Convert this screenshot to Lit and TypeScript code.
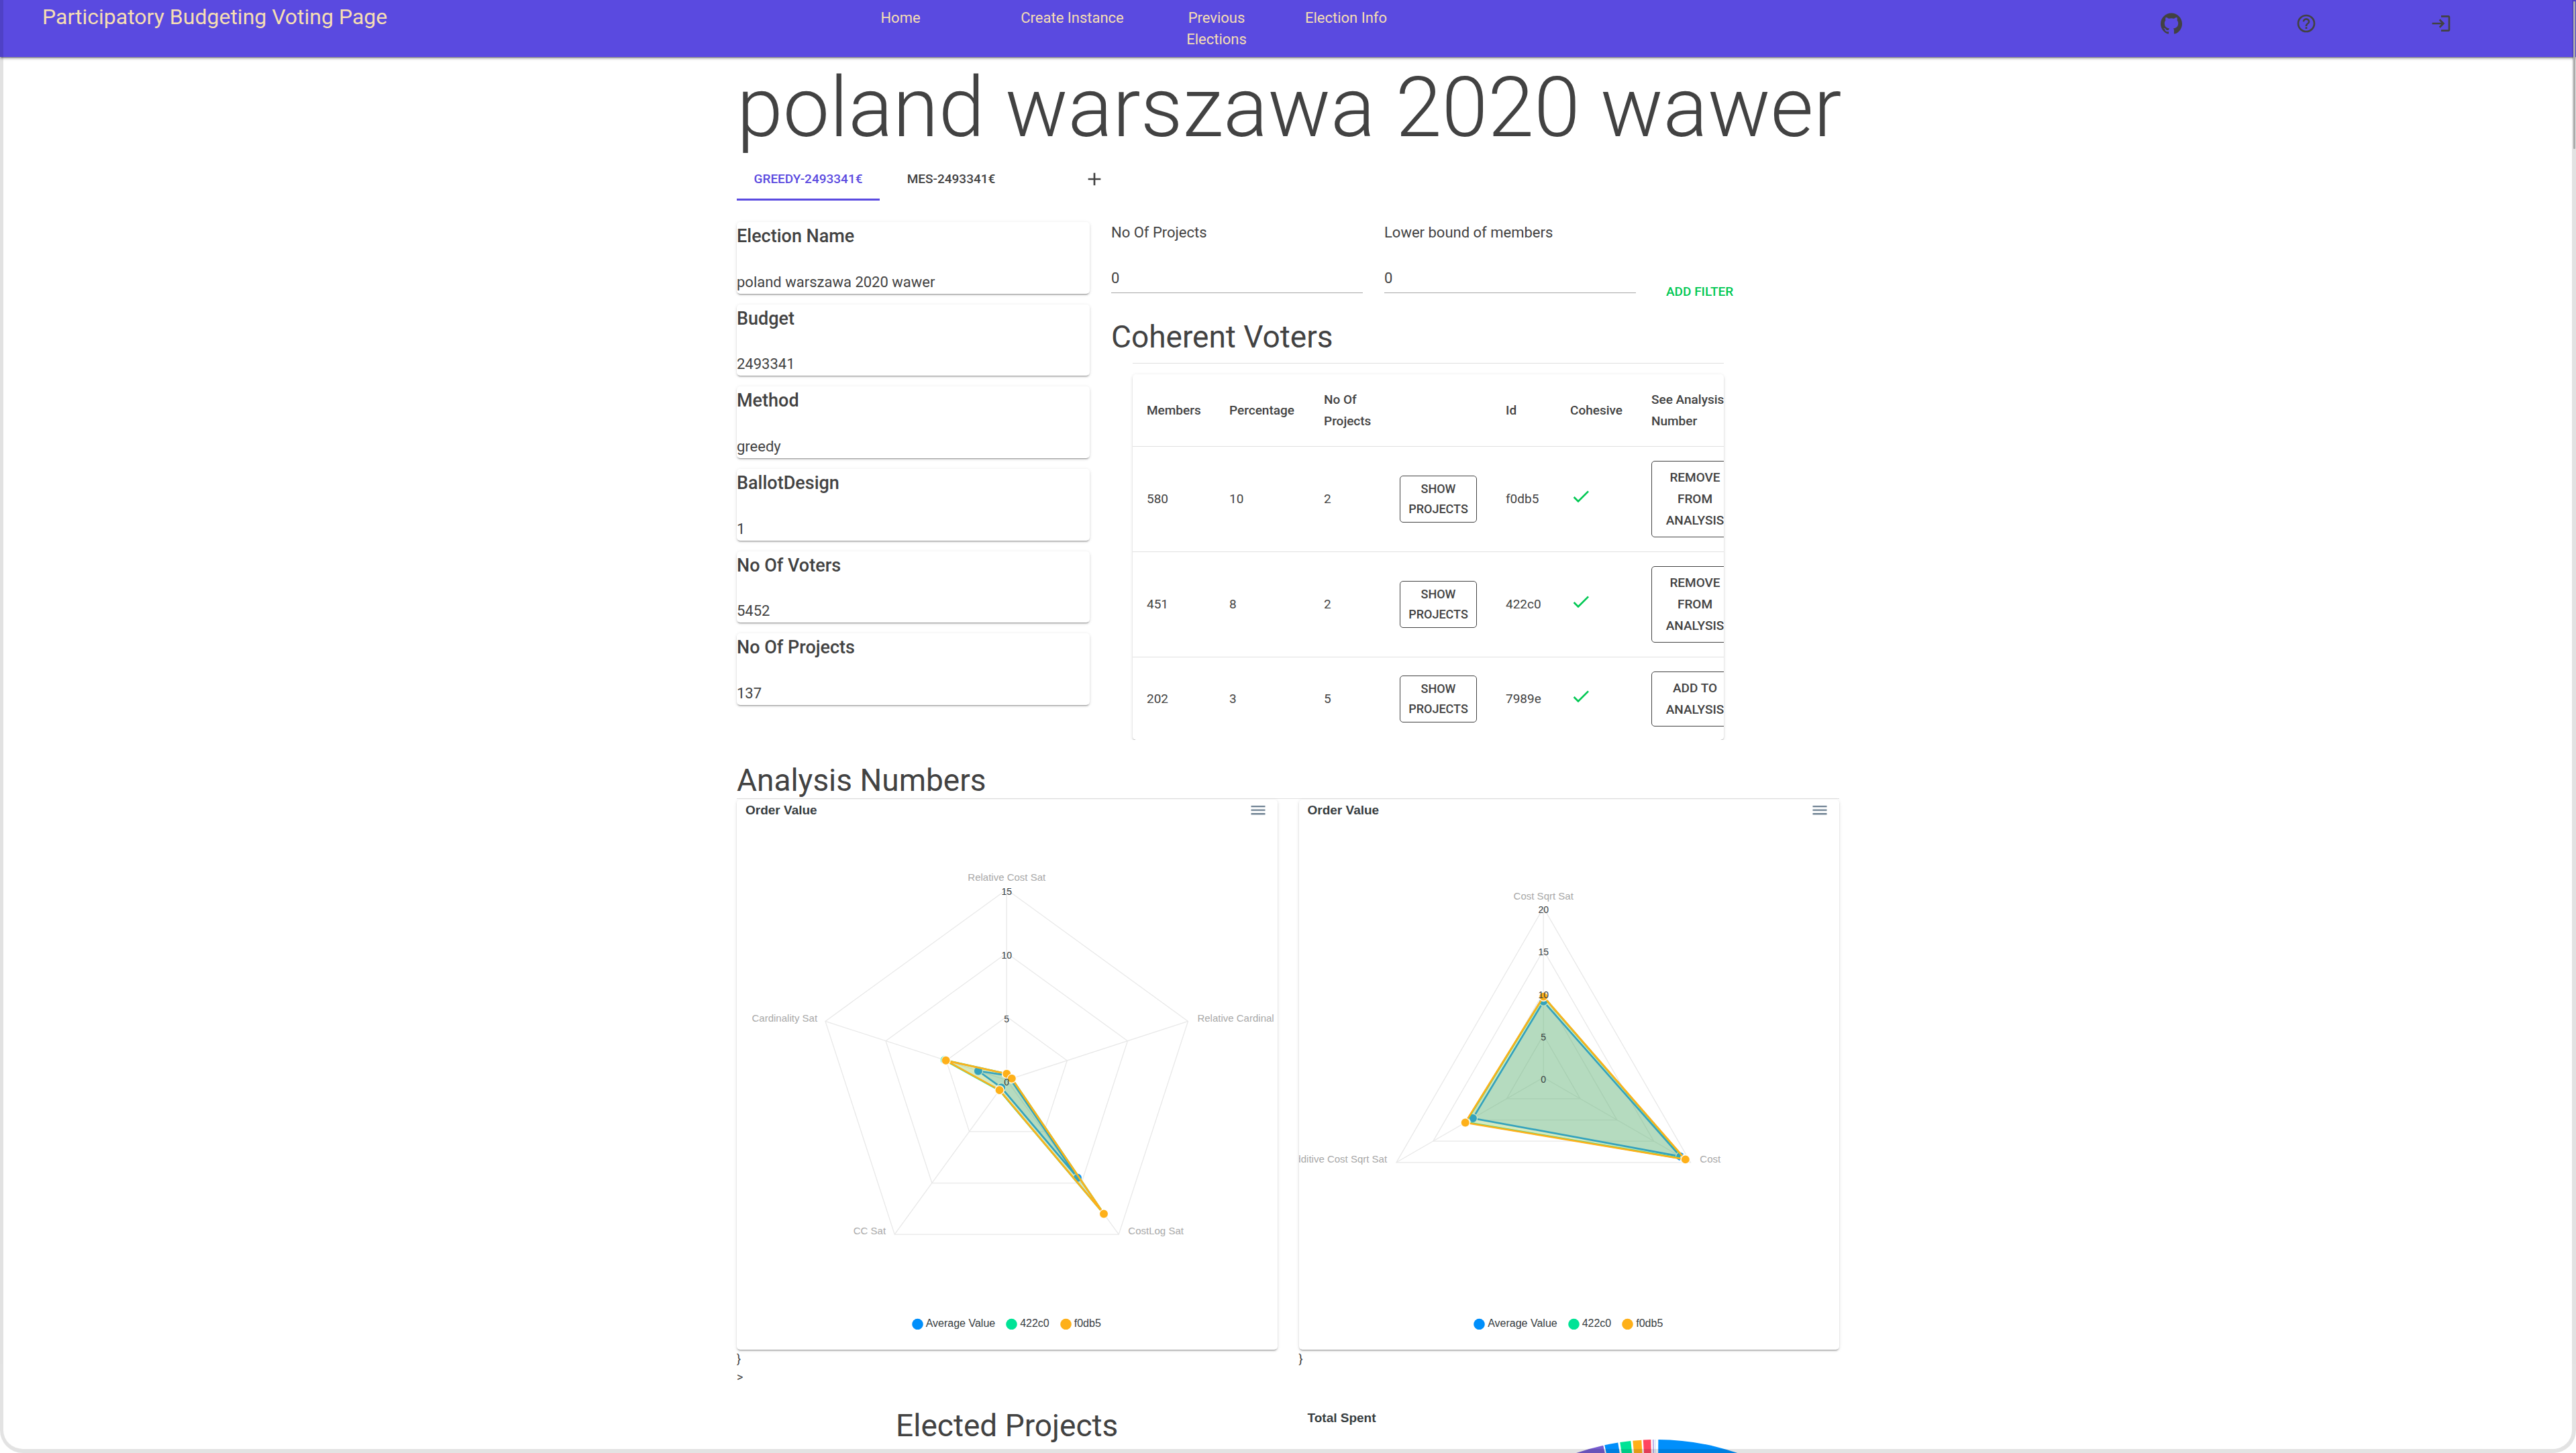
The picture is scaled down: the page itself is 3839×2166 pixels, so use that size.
import { LitElement, html, svg, css } from "lit";
import { customElement, property } from "lit/decorators.js";

type Series = { name: string; color: string; values: number[] };
type AxisLabel = { text: string; x: number; y: number; anchor: string };

const COLORS = { blue: "#008ffb", green: "#00e396", orange: "#feb019", red: "#ff4560", purple: "#775dd0" };

@customElement("radar-card")
export class RadarCard extends LitElement {
  @property({ attribute: false }) series: Series[] = [];
  @property({ attribute: false }) labels: AxisLabel[] = [];
  @property({ type: Number }) cx = 0;
  @property({ type: Number }) cy = 0;
  @property({ type: Number }) radius = 0;
  @property({ type: Number }) max = 0;

  static styles = css`
    :host {
      display: flex;
      flex-direction: column;
      background: #fff;
      border-radius: 5px;
      overflow: hidden;
      box-shadow: 0 3px 1px -2px rgba(0, 0, 0, 0.2), 0 2px 2px rgba(0, 0, 0, 0.14), 0 1px 5px rgba(0, 0, 0, 0.12);
      font-family: "Liberation Sans", Arial, sans-serif;
      color: #373d3f;
    }
    .head {
      display: flex;
      justify-content: space-between;
      align-items: flex-start;
      height: 40px;
      padding: 2px 15px 0 13px;
      box-sizing: border-box;
    }
    .title {
      margin: 0;
      font-size: 19px;
      line-height: 28px;
      font-weight: 700;
    }
    .menu {
      padding: 0;
      border: 0;
      background: none;
      width: 28px;
      height: 28px;
    }
    .menu svg {
      display: block;
      fill: #6e8192;
    }
    .plot {
      display: block;
      width: 100%;
    }
    .tick {
      font-size: 14px;
      fill: #373d3f;
    }
    .axis {
      font-size: 15px;
      fill: #a8a8a8;
    }
    .legend {
      display: flex;
      justify-content: center;
      gap: 16px;
      margin: 0;
      padding: 21px 2px 29px 0;
      list-style: none;
      font-size: 16px;
      line-height: 20px;
    }
    .item {
      display: flex;
      align-items: center;
      gap: 4px;
    }
  `;

  private point(index: number, value: number): [number, number] {
    const angle = (index * 2 * Math.PI) / this.labels.length;
    const r = (value / this.max) * this.radius;
    return [this.cx + r * Math.sin(angle), this.cy - r * Math.cos(angle)];
  }

  private ring(values: number[]): string {
    return values.map((v, i) => this.point(i, v).map((n) => n.toFixed(1)).join(",")).join(" ");
  }

  render() {
    const ticks: number[] = [];
    for (let t = 0; t <= this.max; t += 5) ticks.push(t);
    return html`
      <div class="head">
        <h3 class="title">Order Value</h3>
        <button class="menu" aria-label="Menu">
          <svg width="28" height="28" viewBox="0 0 24 24">
            <path d="M3 17.5h18v-2H3v2zm0-4.8h18v-2H3v2zm0-6.8v2h18v-2H3z" />
          </svg>
        </button>
      </div>
      <svg class="plot" viewBox="0 40 805 710">
        ${ticks.slice(1).map(
          (t) => svg`<polygon points=${this.ring(this.labels.map(() => t))} fill="none" stroke="#e8e8e8" stroke-width="1.3" />`
        )}
        ${this.labels.map((_, i) => {
          const [x, y] = this.point(i, this.max);
          return svg`<line x1=${this.cx} y1=${this.cy} x2=${x} y2=${y} stroke="#e8e8e8" stroke-width="1.3" />`;
        })}
        ${this.series.map(
          (s) => svg`<g>
            <polygon points=${this.ring(s.values)} fill=${s.color} fill-opacity="0.2" stroke=${s.color} stroke-width="2.7" />
            ${s.values.map((v, i) => {
              const [x, y] = this.point(i, v);
              return svg`<circle cx=${x} cy=${y} r="6.6" fill=${s.color} stroke="#fff" stroke-opacity="0.9" stroke-width="1.3" />`;
            })}
          </g>`
        )}
        ${ticks.map((t) => svg`<text class="tick" x=${this.cx} y=${this.point(0, t)[1] + 8} text-anchor="middle">${t}</text>`)}
        ${this.labels.map((l) => svg`<text class="axis" x=${l.x} y=${l.y} text-anchor=${l.anchor}>${l.text}</text>`)}
      </svg>
      <ul class="legend">
        ${this.series.map(
          (s) => html`<li class="item">
            <svg width="17" height="18" viewBox="0 0 17 18"><circle cx="8.5" cy="10" r="8.3" fill=${s.color} /></svg>${s.name}
          </li>`
        )}
      </ul>
    `;
  }
}

@customElement("app-root")
export class AppRoot extends LitElement {
  static styles = css`
    :host {
      display: block;
      font-family: Roboto, sans-serif;
      font-size: 22px;
      line-height: 32px;
      color: #424242;
      background: #fff;
    }
    .page {
      position: relative;
      height: 100vh;
      overflow: hidden;
    }
    .bar {
      display: grid;
      grid-template-columns: 1214fr 256fr 256fr 174fr 212fr 1023fr 201fr 201fr 201fr 101fr;
      align-items: start;
      height: 85px;
      padding-top: 11px;
      box-sizing: border-box;
      background: #5a4ae0;
      box-shadow: 0 3px 1px -2px rgba(0, 0, 0, 0.2), 0 2px 3px rgba(0, 0, 0, 0.3), 0 2px 6px rgba(0, 0, 0, 0.1);
    }
    .brand {
      padding-left: 63px;
      font-size: 32px;
      line-height: 28px;
      color: #f5deb3;
    }
    .link {
      padding: 0 24px;
      text-align: center;
      text-decoration: none;
      color: #f5deb3;
    }
    .tool {
      justify-self: center;
      padding: 0;
      margin-top: 8px;
      border: 0;
      background: none;
      color: #424242;
    }
    .tool:first-of-type {
      grid-column: 7;
    }
    .icon {
      display: block;
      width: 32px;
      height: 32px;
      fill: currentColor;
    }
    .main {
      max-width: 1643px;
      margin: 0 auto;
      padding-top: 12px;
    }
    .name {
      margin: 0;
      font-size: 124px;
      line-height: 128px;
      font-weight: 300;
      white-space: nowrap;
    }
    .tabs {
      display: flex;
      margin-top: 10px;
    }
    .tab {
      display: grid;
      place-items: center;
      min-width: 213px;
      height: 64px;
      padding: 0 21px;
      border: 0;
      border-bottom: 3px solid transparent;
      border-top: 3px solid transparent;
      background: none;
      font: 500 19px/32px Roboto, sans-serif;
      color: #424242;
    }
    .tab.on {
      color: #5a4ae0;
      border-bottom-color: #5a4ae0;
    }
    .overview {
      display: grid;
      grid-template-columns: 526fr 1085fr;
      gap: 32px;
      align-items: start;
      margin-top: 32px;
    }
    .facts {
      display: grid;
      grid-auto-rows: 1fr;
      gap: 16px;
      min-height: 720px;
    }
    .fact {
      display: flex;
      flex-direction: column;
      justify-content: space-between;
      padding-bottom: 1px;
      border-radius: 5px;
      box-shadow: 0 3px 1px -2px rgba(0, 0, 0, 0.2), 0 2px 2px rgba(0, 0, 0, 0.14), 0 1px 5px rgba(0, 0, 0, 0.12);
    }
    .fact-title {
      margin: 0;
      font-size: 27px;
      line-height: 43px;
      font-weight: 500;
    }
    .fact-value {
      margin: 0;
    }
    .filters {
      display: grid;
      grid-template-columns: 375fr 375fr 271fr;
      gap: 32px;
      align-items: start;
      height: 128px;
    }
    .field {
      display: flex;
      flex-direction: column;
      gap: 32px;
    }
    .input {
      height: 42px;
      padding: 0 0 2px;
      box-sizing: border-box;
      border: 0;
      border-bottom: 1px solid #a6a6a6;
      border-radius: 0;
      outline: 0;
      background: none;
      font: 400 22px/32px Roboto, sans-serif;
      color: #424242;
    }
    .add {
      align-self: end;
      justify-self: start;
      height: 48px;
      padding: 0 13px;
      border: 0;
      background: none;
      font: 500 19px/32px Roboto, sans-serif;
      color: #00c853;
    }
    .heading {
      margin: 0;
      font-size: 46px;
      line-height: 54px;
      font-weight: 400;
    }
    .voters {
      margin-top: 16px;
    }
    .rule {
      width: 881px;
      max-width: 100%;
      height: 1px;
      margin: 12px 0 16px 32px;
      border: 0;
      background: #e0e0e0;
    }
    .table-card {
      width: 881px;
      max-width: 100%;
      height: 545px;
      margin-left: 32px;
      overflow: hidden;
      border-radius: 5px;
      box-shadow: 0 3px 1px -2px rgba(0, 0, 0, 0.2), 0 2px 2px rgba(0, 0, 0, 0.14), 0 1px 5px rgba(0, 0, 0, 0.12);
      clip-path: inset(-4px -4px 0 -4px);
    }
    .table {
      width: 923px;
      table-layout: fixed;
      border-collapse: separate;
      border-spacing: 0;
      font-size: 19px;
      line-height: 32px;
    }
    .table th,
    .table td {
      padding: 0 0 0 21px;
      text-align: left;
      vertical-align: middle;
      border-bottom: 1px solid #e0e0e0;
    }
    .table th {
      height: 107px;
      font-weight: 500;
    }
    .table td {
      height: 156px;
    }
    .table .short td {
      height: 124px;
    }
    .w123 { width: 102px; }
    .w141 { width: 120px; }
    .w113 { width: 92px; }
    .w158 { width: 137px; }
    .w96 { width: 75px; }
    .w121 { width: 100px; }
    .show,
    .analyse {
      border: 1px solid #424242;
      border-radius: 5px;
      background: none;
      color: #424242;
      font-family: Roboto, sans-serif;
      font-weight: 500;
    }
    .show {
      width: 115px;
      padding: 4px 8px;
      font-size: 18px;
      line-height: 30px;
    }
    .analyse {
      width: 130px;
      padding: 8px 16px;
      font-size: 19px;
      line-height: 32px;
    }
    .check {
      margin-top: -8px;
      fill: #00c853;
    }
    .analysis {
      margin-top: 33px;
    }
    .line {
      height: 1px;
      margin: 0 0 1px;
      border: 0;
      background: #e0e0e0;
    }
    .charts {
      display: grid;
      grid-template-columns: 1fr 1fr;
      column-gap: 32px;
    }
    .stray {
      font-size: 18px;
      line-height: 27px;
    }
    .results {
      display: grid;
      grid-template-columns: 1fr 1fr;
      column-gap: 32px;
      margin-top: 32px;
    }
    .center {
      text-align: center;
    }
    .spent-title {
      height: 40px;
      margin: 0;
      padding: 2px 13px 0;
      box-sizing: border-box;
      font: 700 19px/28px "Liberation Sans", Arial, sans-serif;
      color: #373d3f;
    }
    .pie {
      display: block;
      width: 100%;
    }
    .frame {
      position: absolute;
      inset: 0;
      pointer-events: none;
      border: solid rgba(0, 0, 0, 0.11);
      border-width: 0 6px 6px 5px;
      border-radius: 0 0 34px 34px;
    }
    .thumb {
      position: absolute;
      top: 2px;
      right: 1px;
      width: 3px;
      height: 220px;
      border-radius: 1px;
      background: #ababab;
    }
  `;

  private facts = [
    ["Election Name", "poland warszawa 2020 wawer"],
    ["Budget", "2493341"],
    ["Method", "greedy"],
    ["BallotDesign", "1"],
    ["No Of Voters", "5452"],
    ["No Of Projects", "137"],
  ];

  private voters = [
    { members: 580, percentage: 10, projects: 2, id: "f0db5", action: ["Remove", "From", "Analysis"] },
    { members: 451, percentage: 8, projects: 2, id: "422c0", action: ["Remove", "From", "Analysis"] },
    { members: 202, percentage: 3, projects: 5, id: "7989e", action: ["Add To", "Analysis"] },
  ];

  private satisfaction: Series[] = [
    { name: "Average Value", color: COLORS.blue, values: [0.38, 0.3, 9.49, 0.72, 2.35] },
    { name: "422c0", color: COLORS.green, values: [0.5, 0.42, 13, 0.98, 5.13] },
    { name: "f0db5", color: COLORS.orange, values: [0.5, 0.42, 13, 0.96, 5.03] },
  ];
  private satisfactionLabels: AxisLabel[] = [
    { text: "Relative Cost Sat", x: 402, y: 121, anchor: "middle" },
    { text: "Relative Cardinal", x: 686, y: 331, anchor: "start" },
    { text: "CostLog Sat", x: 583, y: 648, anchor: "start" },
    { text: "CC Sat", x: 222, y: 648, anchor: "end" },
    { text: "Cardinality Sat", x: 120, y: 331, anchor: "end" },
  ];

  private cost: Series[] = [
    { name: "Average Value", color: COLORS.blue, values: [8.96, 18.6, 9.6] },
    { name: "422c0", color: COLORS.green, values: [9.5, 19.2, 10.55] },
    { name: "f0db5", color: COLORS.orange, values: [9.53, 19.3, 10.63] },
  ];
  private costLabels: AxisLabel[] = [
    { text: "Cost Sqrt Sat", x: 364, y: 149, anchor: "middle" },
    { text: "Cost", x: 597, y: 541, anchor: "start" },
    { text: "Additive Cost Sqrt Sat", x: 131, y: 541, anchor: "end" },
  ];

  private slices: [number, number, string][] = [
    [-300, -80, COLORS.purple],
    [-78, -58, COLORS.blue],
    [-55, -39, COLORS.green],
    [-36, -23, COLORS.orange],
    [-20.5, -9, COLORS.red],
    [-6, -5, COLORS.purple],
    [-3, -2.2, "#a6d0f2"],
    [2, 300, COLORS.blue],
  ];

  private slicePath(from: number, to: number): string {
    const cx = 533, cy = 378, r = 370;
    const y = (dx: number) => cy - Math.sqrt(r * r - dx * dx);
    return `M${cx} ${cy}L${cx + from} ${y(from)}A${r} ${r} 0 0 1 ${cx + to} ${y(to)}Z`;
  }

  render() {
    return html`
      <div class="page">
        <header class="bar">
          <div class="brand">Participatory Budgeting Voting Page</div>
          <a class="link" href="#home">Home</a>
          <a class="link" href="#create">Create Instance</a>
          <a class="link" href="#previous">Previous Elections</a>
          <a class="link" href="#info">Election Info</a>
          <button class="tool" aria-label="GitHub">
            <svg class="icon" viewBox="0 0 24 24"><path d="M12 .297c-6.63 0-12 5.373-12 12 0 5.303 3.438 9.8 8.205 11.385.6.113.82-.258.82-.577 0-.285-.01-1.04-.015-2.04-3.338.724-4.042-1.61-4.042-1.61C4.422 18.07 3.633 17.7 3.633 17.7c-1.087-.744.084-.729.084-.729 1.205.084 1.838 1.236 1.838 1.236 1.07 1.835 2.809 1.305 3.495.998.108-.776.417-1.305.76-1.605-2.665-.3-5.466-1.332-5.466-5.93 0-1.31.465-2.38 1.235-3.22-.135-.303-.54-1.523.105-3.176 0 0 1.005-.322 3.3 1.23.96-.267 1.98-.399 3-.405 1.02.006 2.04.138 3 .405 2.28-1.552 3.285-1.23 3.285-1.23.645 1.653.24 2.873.12 3.176.765.84 1.23 1.91 1.23 3.22 0 4.61-2.805 5.625-5.475 5.92.42.36.81 1.096.81 2.22 0 1.606-.015 2.896-.015 3.286 0 .315.21.69.825.57C20.565 22.092 24 17.592 24 12.297c0-6.627-5.373-12-12-12" /></svg>
          </button>
          <button class="tool" aria-label="Help">
            <svg class="icon" viewBox="0 0 24 24"><path d="M11 18h2v-2h-2v2m1-16A10 10 0 0 0 2 12a10 10 0 0 0 10 10 10 10 0 0 0 10-10A10 10 0 0 0 12 2m0 18c-4.410 0-8-3.590-8-8s3.590-8 8-8 8 3.590 8 8-3.590 8-8 8m0-14a4 4 0 0 0-4 4h2a2 2 0 0 1 2-2 2 2 0 0 1 2 2c0 2-3 1.750-3 5h2c0-2.250 3-2.500 3-5a4 4 0 0 0-4-4z" /></svg>
          </button>
          <button class="tool" aria-label="Log in">
            <svg class="icon" viewBox="0 0 24 24"><path d="M11 7 9.600 8.400l2.600 2.600H2v2h10.200l-2.600 2.600L11 17l5-5-5-5m9 12h-8v2h8a2 2 0 0 0 2-2V5a2 2 0 0 0-2-2h-8v2h8v14z" /></svg>
          </button>
        </header>

        <main class="main">
          <h1 class="name">poland warszawa 2020 wawer</h1>
          <div class="tabs" role="tablist">
            <button class="tab on" role="tab" aria-selected="true">GREEDY-2493341€</button>
            <button class="tab" role="tab" aria-selected="false">MES-2493341€</button>
            <button class="tab" aria-label="Add">
              <svg class="icon" viewBox="0 0 24 24"><path d="M19 13h-6v6h-2v-6H5v-2h6V5h2v6h6v2z" /></svg>
            </button>
          </div>

          <div class="overview">
            <div class="facts">
              ${this.facts.map(
                ([title, value]) => html`<section class="fact">
                  <h4 class="fact-title">${title}</h4>
                  <p class="fact-value">${value}</p>
                </section>`
              )}
            </div>
            <div>
              <div class="filters">
                <div class="field">
                  <label for="projects">No Of Projects</label>
                  <input class="input" id="projects" type="text" inputmode="numeric" value="0" />
                </div>
                <div class="field">
                  <label for="members">Lower bound of members</label>
                  <input class="input" id="members" type="text" inputmode="numeric" value="0" />
                </div>
                <button class="add">ADD FILTER</button>
              </div>
              <h2 class="heading voters">Coherent Voters</h2>
              <hr class="rule" />
              <div class="table-card">
                <table class="table">
                  <thead>
                    <tr>
                      <th class="w123">Members</th>
                      <th class="w141">Percentage</th>
                      <th class="w113">No Of<br />Projects</th>
                      <th class="w158"></th>
                      <th class="w96">Id</th>
                      <th class="w121">Cohesive</th>
                      <th>See Analysis<br />Number</th>
                    </tr>
                  </thead>
                  <tbody>
                    ${this.voters.map(
                      (v) => html`<tr class=${v.action.length < 3 ? "short" : ""}>
                        <td>${v.members}</td>
                        <td>${v.percentage}</td>
                        <td>${v.projects}</td>
                        <td><button class="show">SHOW PROJECTS</button></td>
                        <td>${v.id}</td>
                        <td>
                          <svg class="icon check" viewBox="0 0 24 24"><path d="M21 7 9 19l-5.500-5.500 1.410-1.410L9 16.170 19.590 5.590 21 7z" /></svg>
                        </td>
                        <td>
                          <button class="analyse">
                            ${v.action.map((word, i) => html`${i ? html`<br />` : ""}${word.toUpperCase()}`)}
                          </button>
                        </td>
                      </tr>`
                    )}
                  </tbody>
                </table>
              </div>
            </div>
          </div>

          <h2 class="heading analysis">Analysis Numbers</h2>
          <hr class="line" />
          <div class="charts">
            <div>
              <radar-card .series=${this.satisfaction} .labels=${this.satisfactionLabels} cx="402" cy="418" radius="284" max="15"></radar-card>
              <div class="stray">}<br />&gt;</div>
            </div>
            <div>
              <radar-card .series=${this.cost} .labels=${this.costLabels} cx="364" cy="414" radius="253" max="20"></radar-card>
              <div class="stray">}</div>
            </div>
          </div>

          <div class="results">
            <h2 class="heading center">Elected Projects</h2>
            <div>
              <h3 class="spent-title">Total Spent</h3>
              <svg class="pie" viewBox="0 0 805 400">
                ${this.slices.map(([from, to, color]) => svg`<path d=${this.slicePath(from, to)} fill=${color} />`)}
              </svg>
            </div>
          </div>
        </main>

        <div class="frame"></div>
        <div class="thumb"></div>
      </div>
    `;
  }
}
